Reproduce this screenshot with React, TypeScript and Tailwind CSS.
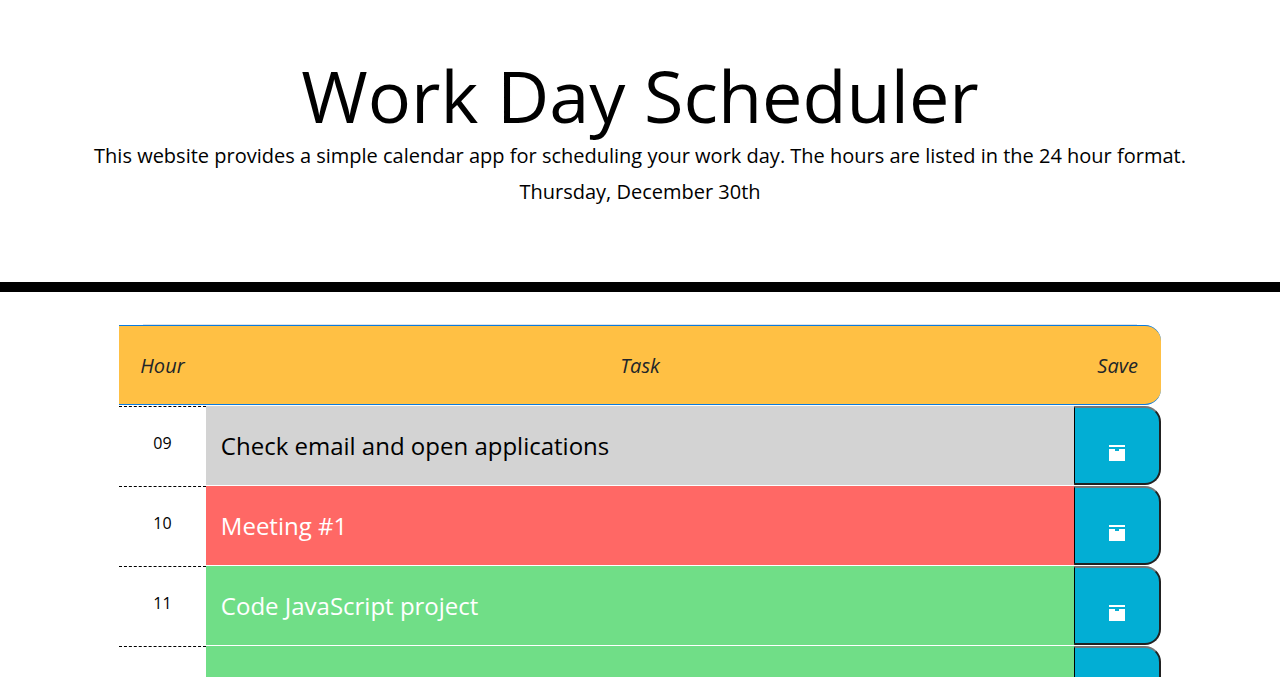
const rows = [
  { hour: "09", task: "Check email and open applications", tone: "bg-[#d3d3d3] text-black" },
  { hour: "10", task: "Meeting #1", tone: "bg-[#ff6865] text-white" },
  { hour: "11", task: "Code JavaScript project", tone: "bg-[#70de87] text-white" },
  { hour: "12", task: "Lunch - bring my meal", tone: "bg-[#70de87] text-white" },
];

function ArchiveIcon() {
  return (
    <svg width="16" height="16" viewBox="0 0 16 16" fill="currentColor" shapeRendering="crispEdges" aria-hidden="true">
      <path d="M0 0h16v2H0zM0 4h6v2h4V4h6v12H0z" />
    </svg>
  );
}

export default function App() {
  return (
    <div className="h-screen overflow-y-auto bg-white font-['Open_Sans',sans-serif] text-black [scrollbar-width:none]">
      <header className="border-b-10 border-black px-6 pt-[52px] pb-[72px] text-center">
        <h1 className="text-[72px] leading-[86px]">Work Day Scheduler</h1>
        <p className="text-[20px] leading-9">
          This website provides a simple calendar app for scheduling your work day. The hours are listed in the 24 hour format.
        </p>
        <p className="text-[20px] leading-9">Thursday, December 30th</p>
      </header>
      <main className="mx-auto mt-8 w-full max-w-[1042px]">
        <div className="mx-6 h-px bg-[#dee2e6]" />
        <div className="grid h-20 grid-cols-[1fr_10fr_1fr] items-center rounded-r-2xl border-y border-[#0a7be0] bg-[#ffc044] pt-0.5 text-center text-[20px] text-[#212529] italic">
          <span>Hour</span>
          <span>Task</span>
          <span>Save</span>
        </div>
        {rows.map((row) => (
          <div key={row.hour} className="grid h-20 grid-cols-[1fr_10fr_1fr] border-t border-white">
            <label htmlFor={`task-${row.hour}`} className="border-t border-dashed border-black pt-6 text-center text-base">
              {row.hour}
            </label>
            <textarea
              id={`task-${row.hour}`}
              defaultValue={row.task}
              className={`block h-full w-full resize-none overflow-hidden px-[15px] pt-[22px] text-[24px] leading-9 outline-none ${row.tone}`}
            />
            <button
              type="button"
              aria-label={`Save ${row.hour}`}
              className="flex items-center justify-center rounded-r-2xl border-t-2 border-r-2 border-b-2 border-l border-t-[#767676] border-r-[#212121] border-b-[#212121] border-l-black bg-[#02aed4] pt-3.5 text-white"
            >
              <ArchiveIcon />
            </button>
          </div>
        ))}
      </main>
    </div>
  );
}
